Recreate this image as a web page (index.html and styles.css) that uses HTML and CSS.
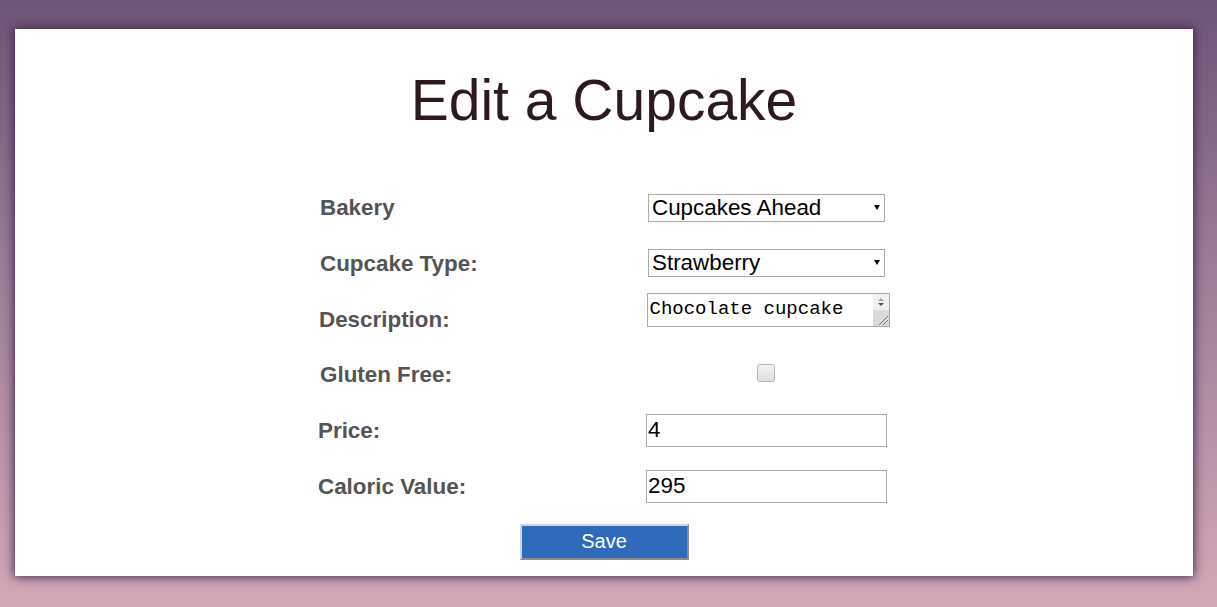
FILE: index.html
```html
<!DOCTYPE html>
<html lang="en">
<head>
<meta charset="utf-8">
<title>Edit a Cupcake</title>
<link rel="stylesheet" href="styles.css">
</head>
<body>
<main class="card">
  <h1 class="title">Edit a Cupcake</h1>
  <form class="form">
    <div class="grid">
      <label class="label">Bakery</label>
      <div class="cell">
        <span class="select-wrap"><select class="select"><option>Cupcakes Ahead</option></select></span>
      </div>
      <label class="label">Cupcake Type:</label>
      <div class="cell">
        <span class="select-wrap"><select class="select"><option>Strawberry</option></select></span>
      </div>
      <label class="label label-desc">Description:</label>
      <div class="cell cell-top">
        <span class="ta-wrap">
          <textarea class="textarea" rows="1">Chocolate cupcake</textarea>
          <span class="sb" aria-hidden="true">
            <span class="sb-arrows">
              <svg width="16" height="16" viewBox="0 0 16 16"><path d="M5 7 L8 4 L11 7 Z" fill="#a3a3a3"/><path d="M5 9 L8 12 L11 9 Z" fill="#505050"/></svg>
            </span>
            <span class="sb-grip">
              <svg width="16" height="16" viewBox="0 0 16 16"><path d="M6 15 L15 6 M10 15 L15 10" stroke="#6e6e6e" stroke-width="1"/></svg>
            </span>
          </span>
        </span>
      </div>
      <label class="label">Gluten Free:</label>
      <div class="cell">
        <input type="checkbox" class="check">
      </div>
      <label class="label label-shift">Price:</label>
      <div class="cell">
        <input type="text" class="input" value="4">
      </div>
      <label class="label label-shift">Caloric Value:</label>
      <div class="cell">
        <input type="text" class="input" value="295">
      </div>
    </div>
    <div class="actions">
      <button type="button" class="save">Save</button>
    </div>
  </form>
</main>
</body>
</html>
```
FILE: styles.css
```css
html, body {
  margin: 0;
  padding: 0;
}
body {
  width: 1217px;
  height: 607px;
  overflow: hidden;
  background: linear-gradient(to bottom, #6d5576 0%, #9c7e98 45%, #d4a9b6 100%);
  font-family: "Liberation Sans", Arial, sans-serif;
  padding: 29px 24px 0 15px;
  box-sizing: border-box;
}
.card {
  background: #fff;
  width: 1178px;
  height: 547px;
  box-sizing: border-box;
  padding-top: 36px;
  box-shadow: 0 0 10px 1px #3d2452;
  display: flex;
  flex-direction: column;
  align-items: center;
}
.title {
  margin: 0;
  font-weight: normal;
  font-size: 57px;
  line-height: 70px;
  color: #2e1a1c;
  text-align: center;
}
.form {
  margin-top: 45px;
  display: flex;
  flex-direction: column;
  align-items: center;
}
.grid {
  display: grid;
  grid-template-columns: 326px 246px;
  grid-auto-rows: 55.67px;
  align-items: center;
}
.label {
  font-size: 22.4px;
  font-weight: bold;
  color: #545454;
  padding-left: 2px;
  line-height: 26px;
  padding-top: 1px;
}
.label-desc {
  padding-left: 1px;
}
.label-shift {
  padding-left: 0;
}
.cell {
  display: flex;
  justify-content: center;
  align-items: center;
}
.cell-top {
  align-self: start;
  padding-top: 2px;
}
.select-wrap {
  position: relative;
  display: inline-block;
}
.select-wrap::after {
  content: "";
  position: absolute;
  right: 6px;
  top: 11px;
  border-left: 3px solid transparent;
  border-right: 3px solid transparent;
  border-top: 5px solid #000;
  pointer-events: none;
}
.select {
  -webkit-appearance: none;
  appearance: none;
  width: 237px;
  height: 28px;
  box-sizing: border-box;
  border: 1px solid #a9a9a9;
  border-radius: 0;
  background: #fff;
  font-family: "Liberation Sans", Arial, sans-serif;
  font-size: 22.4px;
  line-height: 26px;
  color: #000;
  padding: 0 0 0 3px;
  margin: 0 1px 0 0;
}
.ta-wrap {
  position: relative;
  display: inline-block;
  margin-left: 2px;
  line-height: 0;
}
.textarea {
  width: 243px;
  height: 34px;
  box-sizing: border-box;
  border: 1px solid #a9a9a9;
  font-family: "Liberation Mono", "Courier New", monospace;
  font-size: 19px;
  line-height: 22px;
  padding: 4px 2px;
  color: #000;
  resize: none;
  overflow: hidden;
  margin: 0;
}
.sb {
  position: absolute;
  right: 1px;
  top: 1px;
  bottom: 1px;
  width: 16px;
  display: flex;
  flex-direction: column;
}
.sb-arrows {
  height: 16px;
  background: #f0f0f0;
}
.sb-grip {
  flex: 1;
  background: #dadada;
  display: flex;
  align-items: flex-end;
}
.check {
  -webkit-appearance: none;
  appearance: none;
  width: 18px;
  height: 18px;
  margin: 0 0 4px -2px;
  border: 1px solid #b3b3b3;
  border-radius: 3px;
  background: linear-gradient(to bottom, #f4f4f4, #dedede);
  box-sizing: border-box;
}
.input {
  width: 241px;
  height: 33px;
  box-sizing: border-box;
  border: 1px solid #a9a9a9;
  font-family: "Liberation Sans", Arial, sans-serif;
  font-size: 22.4px;
  padding: 0 1px;
  color: #000;
  margin: 0 1px 0 0;
}
.actions {
  margin-top: 10px;
  display: flex;
  justify-content: center;
}
.save {
  width: 169px;
  height: 36px;
  box-sizing: border-box;
  background: #2f6bba;
  color: #fff;
  font-family: "Liberation Sans", Arial, sans-serif;
  font-size: 20px;
  border: 2px solid;
  border-color: #d0d6de #8c8c8c #8c8c8c #d0d6de;
  padding: 0;
  margin-left: 0;
}
```
